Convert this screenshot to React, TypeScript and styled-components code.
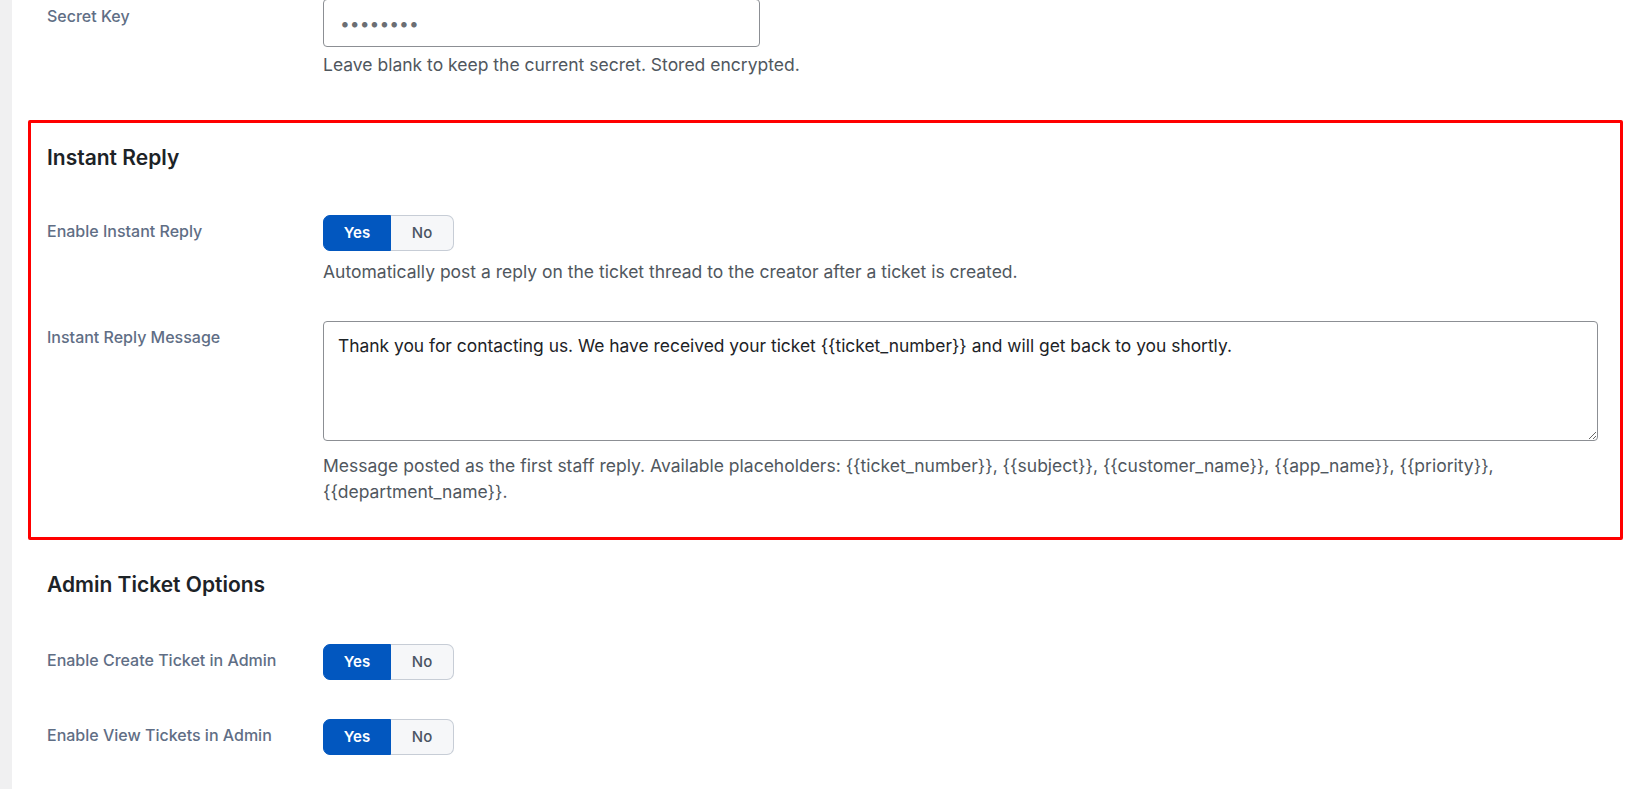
import React from 'react'
import styled, { createGlobalStyle, css } from 'styled-components'

const GlobalStyle = createGlobalStyle`
  html, body {
    margin: 0;
    padding: 0;
    height: 789px;
    overflow: hidden;
    background: #ffffff;
  }

  body {
    font-family: Inter, 'Noto Sans', 'Liberation Sans', sans-serif;
    -webkit-font-smoothing: antialiased;
  }

  * {
    box-sizing: border-box;
  }
`

const Page = styled.div`
  display: flex;
  height: 789px;
  overflow: hidden;
`

const SideStrip = styled.div`
  width: 12px;
  flex-shrink: 0;
  background: #f0f0f1;
`

const Main = styled.main`
  flex: 1;
  padding: 0 9px 0 16px;
  background: #ffffff;
`

const Section = styled.section<{ $highlighted?: boolean; $gapAfter?: number }>`
  padding: 0 25px 0 19px;
  margin-bottom: ${({ $gapAfter }) => $gapAfter ?? 0}px;

  ${({ $highlighted }) =>
    $highlighted &&
    css`
      border: 3px solid #ff0000;
      border-radius: 2px;
      padding: 22px 22px 32px 16px;
    `}
`

const SectionTitle = styled.h2<{ $gapAfter?: number }>`
  margin: 0 0 ${({ $gapAfter }) => $gapAfter ?? 44}px;
  font-size: 21px;
  line-height: 26px;
  font-weight: 600;
  color: #1d2327;
`

const Row = styled.div<{ $gapAfter?: number }>`
  display: grid;
  grid-template-columns: 276px 1fr;
  align-items: start;
  margin-bottom: ${({ $gapAfter }) => $gapAfter ?? 0}px;
`

const Label = styled.label`
  padding-top: 5px;
  font-size: 16px;
  line-height: 22.5px;
  font-weight: 500;
  color: #5f6e85;
`

const Field = styled.div<{ $stretch?: boolean }>`
  display: flex;
  flex-direction: column;
  align-items: ${({ $stretch }) => ($stretch ? 'stretch' : 'flex-start')};
  min-width: 0;
`

const Help = styled.p<{ $offset?: number }>`
  margin: ${({ $offset }) => $offset ?? 8}px 0 0;
  font-size: 17.5px;
  line-height: 26px;
  color: #50575e;
`

const SecretInput = styled.input`
  width: 437px;
  height: 48px;
  margin-top: -1px;
  padding: 0 16px;
  border: 1px solid #8c8f94;
  border-radius: 4px;
  font-family: inherit;
  font-size: 17.5px;
  color: #1d2327;
  background: #ffffff;
  outline: none;

  &::placeholder {
    color: #6b6e73;
    letter-spacing: 0;
  }
`

const MessageArea = styled.textarea`
  display: block;
  width: 100%;
  height: 120px;
  padding: 12px 14px;
  border: 1px solid #8c8f94;
  border-radius: 4px;
  font-family: inherit;
  font-size: 17.4px;
  line-height: 24px;
  color: #1d2327;
  background: #ffffff;
  resize: vertical;
  outline: none;
`

const ToggleGroup = styled.div`
  display: inline-flex;
  height: 36px;
`

const ToggleOption = styled.button<{ $active?: boolean; $side: 'left' | 'right' }>`
  height: 36px;
  padding: 0;
  font-family: inherit;
  font-size: 15px;
  line-height: 34px;
  text-align: center;
  cursor: pointer;
  border: 1px solid #c7cdd6;
  ${({ $side }) =>
    $side === 'left'
      ? css`
          border-radius: 7px 0 0 7px;
          width: 68px;
        `
      : css`
          border-left: none;
          border-radius: 0 7px 7px 0;
          width: 63px;
        `}
  ${({ $active }) =>
    $active
      ? css`
          background: #0257bf;
          border-color: #0257bf;
          color: #ffffff;
          font-weight: 600;
        `
      : css`
          background: #f6f7f9;
          color: #4b5563;
          font-weight: 500;
        `}
`

const YesNoToggle = ({ value }: { value: boolean }) => (
  <ToggleGroup>
    <ToggleOption type="button" $side="left" $active={value}>
      Yes
    </ToggleOption>
    <ToggleOption type="button" $side="right" $active={!value}>
      No
    </ToggleOption>
  </ToggleGroup>
)

const placeholders = '{{ticket_number}}, {{subject}}, {{customer_name}}, {{app_name}}, {{priority}}, {{department_name}}.'

export default function App() {
  return (
    <>
      <GlobalStyle />
      <Page>
        <SideStrip />
        <Main>
          <Section $gapAfter={42}>
            <Row>
              <Label>Secret Key</Label>
              <Field>
                <SecretInput type="password" placeholder="••••••••" />
                <Help $offset={5}>Leave blank to keep the current secret. Stored encrypted.</Help>
              </Field>
            </Row>
          </Section>

          <Section $highlighted $gapAfter={32}>
            <SectionTitle>Instant Reply</SectionTitle>
            <Row $gapAfter={36}>
              <Label>Enable Instant Reply</Label>
              <Field>
                <YesNoToggle value />
                <Help>Automatically post a reply on the ticket thread to the creator after a ticket is created.</Help>
              </Field>
            </Row>
            <Row>
              <Label>Instant Reply Message</Label>
              <Field $stretch>
                <MessageArea defaultValue="Thank you for contacting us. We have received your ticket {{ticket_number}} and will get back to you shortly." />
                <Help $offset={12}>
                  Message posted as the first staff reply. Available placeholders: {placeholders}
                </Help>
              </Field>
            </Row>
          </Section>

          <Section>
            <SectionTitle $gapAfter={46}>Admin Ticket Options</SectionTitle>
            <Row $gapAfter={39}>
              <Label>Enable Create Ticket in Admin</Label>
              <Field>
                <YesNoToggle value />
              </Field>
            </Row>
            <Row>
              <Label>Enable View Tickets in Admin</Label>
              <Field>
                <YesNoToggle value />
              </Field>
            </Row>
          </Section>
        </Main>
      </Page>
    </>
  )
}
